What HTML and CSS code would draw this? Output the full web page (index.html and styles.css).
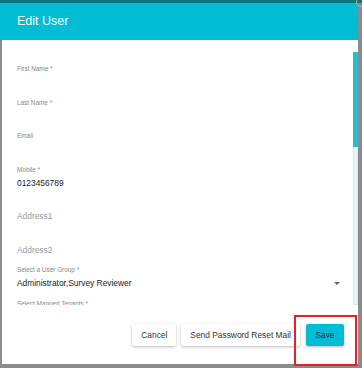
FILE: index.html
```html
<!DOCTYPE html>
<html lang="en">
<head>
    <meta charset="UTF-8">
    <meta name="viewport" content="width=device-width, initial-scale=1.0">
    <title>Edit User</title>

    <link rel="stylesheet" href="styles.css">
</head>
<body>

<div class="page-strip"></div>
<span class="close-btn"></span>

<div class="modal">
    <div class="modal-header">Edit User</div>

    <div class="modal-body">
        <div class="fields-wrap">
            <form class="fields" id="editUserForm">
                <div class="field">
                    <label for="fname">First Name *</label>
                    <input id="fname" type="text" name="fname">
                </div>
                <div class="field">
                    <label for="lname">Last Name *</label>
                    <input id="lname" type="text" name="lname">
                </div>
                <div class="field">
                    <label for="email">Email</label>
                    <input id="email" type="text" name="email">
                </div>
                <div class="field">
                    <label for="mobile">Mobile *</label>
                    <input id="mobile" type="text" name="mobile" value="0123456789">
                </div>
                <div class="field">
                    <label for="address1"></label>
                    <input id="address1" type="text" name="address1" placeholder="Address1">
                </div>
                <div class="field">
                    <label for="address2"></label>
                    <input id="address2" type="text" name="address2" placeholder="Address2">
                </div>
                <div class="field">
                    <label>Select a User Group *</label>
                    <div class="select">
                        <span>Administrator,Survey Reviewer</span>
                        <span class="caret"></span>
                    </div>
                </div>
                <div class="field">
                    <label>Select Mapped Tenants *</label>
                    <div class="select">
                        <span></span>
                        <span class="caret"></span>
                    </div>
                </div>
            </form>

            <!-- custom scrollbar, headless hides the native one -->
            <div class="scrollbar">
                <div class="scrollbar-thumb"></div>
            </div>
        </div>

        <div class="modal-footer">
            <button type="button" class="btn">Cancel</button>
            <button type="button" class="btn">Send Password Reset Mail</button>
            <button type="submit" form="editUserForm" class="btn btn-save">Save</button>
        </div>
    </div>
</div>

<div class="highlight"></div>

</body>
</html>
```

FILE: styles.css
```css
*{
    padding: 0;
    margin: 0;
    box-sizing: border-box;
}

body{
    background-color: #8c8c8c;
    font-family: "Liberation Sans", Arial, sans-serif;
    width: 362px;
    height: 368px;
    overflow: hidden;
    position: relative;
}

.page-strip
{
    height: 3px;
    background-color: #0b737c;
}

.close-btn
{
    position: absolute;
    left: 356px;
    top: -3px;
    width: 10px;
    height: 10px;
    border: 1px solid #b5b5b5;
    border-radius: 50%;
}

.modal
{
    width: 358px;
}

.modal-header
{
    height: 37px;
    line-height: 37px;
    padding-left: 17px;
    background-color: #00bcd4;
    color: #fff;
    font-size: 12.5px;
}

.modal-body
{
    margin-left: 2px;
    height: 324px;
    background-color: #fff;
    padding-top: 12px;
}

.fields-wrap
{
    position: relative;
}

.fields
{
    height: 253px;
    overflow: hidden;
    padding: 13px 17px 0 15px;
}

.scrollbar
{
    position: absolute;
    top: 0;
    right: 0;
    bottom: 0;
    width: 5px;
    background-color: #e6f8fa;
    border: 1px solid #c4eff5;
}

.scrollbar-thumb
{
    height: 95px;
    margin: -1px;
    background-color: #1fc1d6;
}

.field
{
    margin-bottom: 10.5px;
}

label
{
    display: block;
    height: 8px;
    line-height: 8px;
    font-size: 6.4px;
    color: #888;
}

input
{
    display: block;
    width: 100%;
    height: 12px;
    margin-top: 3px;
    border: none;
    outline: none;
    font-family: inherit;
    font-size: 8.4px;
    color: #222;
    background: transparent;
}

input::placeholder
{
    color: #9a9a9a;
}

.select
{
    display: flex;
    justify-content: space-between;
    align-items: center;
    height: 12px;
    margin-top: 3px;
    font-size: 8.4px;
    color: #222;
}

.caret
{
    width: 0;
    height: 0;
    margin-right: 1px;
    border-left: 3px solid transparent;
    border-right: 3px solid transparent;
    border-top: 3px solid #666;
}

.modal-footer
{
    display: flex;
    justify-content: flex-end;
    gap: 5px;
    padding: 18.5px 14px 0 0;
}

.btn
{
    height: 22px;
    padding: 0 9px;
    border: none;
    border-radius: 2px;
    background-color: #fff;
    box-shadow: 0 1px 3px rgba(0, 0, 0, 0.28);
    font-family: inherit;
    font-size: 8.4px;
    color: #333;
}

.btn-save
{
    margin-left: 1px;
    padding: 0 9.5px;
    background-color: #00bcd4;
}

.highlight
{
    position: absolute;
    left: 294px;
    top: 315px;
    width: 63px;
    height: 51px;
    border: 2px solid #e8202a;
}
```
